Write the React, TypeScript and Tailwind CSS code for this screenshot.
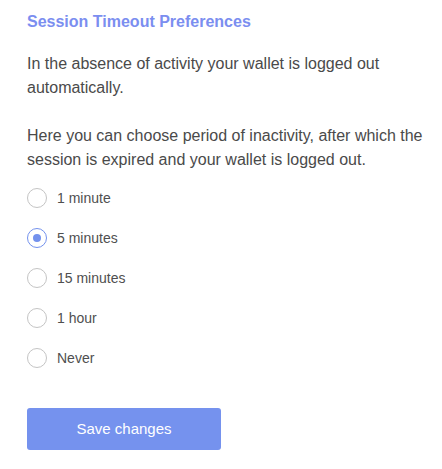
import { useState } from "react";

const options = ["1 minute", "5 minutes", "15 minutes", "1 hour", "Never"];

export default function App() {
  const [selected, setSelected] = useState("5 minutes");

  return (
    <main className="min-h-screen bg-white pl-[27px] pr-[16px] pt-[12px] font-['Liberation_Sans',Arial,sans-serif]">
      <h2 className="text-[16px] font-bold leading-[19px] text-[#7b8ef0]">Session Timeout Preferences</h2>

      <p className="mt-[21px] text-[16px] leading-[24px] text-[#4a4a4a]">
        In the absence of activity your wallet is logged out automatically.
      </p>
      <p className="mt-[24px] text-[16px] leading-[24px] text-[#4a4a4a]">
        Here you can choose period of inactivity, after which the session is expired and your wallet is logged out.
      </p>

      <div className="mt-[6px] flex flex-col">
        {options.map((opt) => {
          const active = opt === selected;
          return (
            <label key={opt} className="flex h-[40px] cursor-pointer items-center gap-[10px]">
              <input
                type="radio"
                name="timeout"
                className="sr-only"
                checked={active}
                onChange={() => setSelected(opt)}
              />
              <span
                className={
                  active
                    ? "grid h-[20px] w-[20px] place-items-center rounded-full border border-[#7391ed] bg-white"
                    : "grid h-[20px] w-[20px] place-items-center rounded-full border border-[#c4c4c4] bg-white"
                }
              >
                {active && <span className="h-[8px] w-[8px] rounded-full bg-[#7391ed]" />}
              </span>
              <span className="text-[14px] text-[#4f4f4f]">{opt}</span>
            </label>
          );
        })}
      </div>

      <button className="mt-[30px] h-[42px] w-[194px] rounded-[3px] bg-[#7592ee] text-[15px] text-white">
        Save changes
      </button>
    </main>
  );
}
